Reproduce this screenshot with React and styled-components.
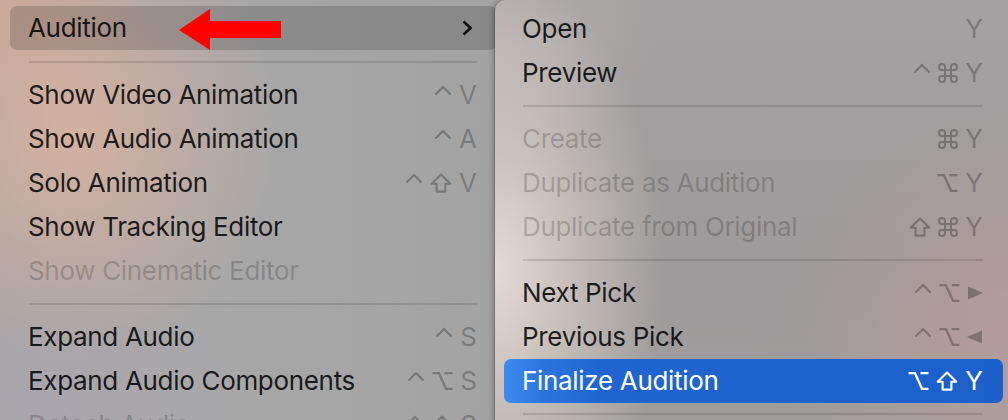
import React from "react";
import styled, { createGlobalStyle } from "styled-components";

const Global = createGlobalStyle`
  html, body { margin: 0; padding: 0; background: #a3a2a3; overflow: hidden; }
  body { font-family: Inter, "Noto Sans", "Liberation Sans", sans-serif; }
`;

const Stage = styled.div`
  position: relative;
  display: flex;
  align-items: flex-start;
  width: 1008px;
  height: 420px;
  overflow: hidden;
`;

const Panel = styled.div`
  flex: none;
  box-sizing: border-box;
  height: 440px;
  display: flex;
  flex-direction: column;
`;

const MainMenu = styled(Panel)`
  width: 507px;
  padding: 6px 10px 0 10px;
  background:
    radial-gradient(ellipse 210px 230px at 70px 130px, rgba(214, 178, 160, 0.95), rgba(214, 178, 160, 0) 100%),
    radial-gradient(ellipse 140px 120px at 0px 10px, rgba(200, 165, 152, 0.9), rgba(200, 165, 152, 0) 100%),
    radial-gradient(ellipse 200px 140px at 40px 400px, rgba(168, 166, 174, 0.9), rgba(168, 166, 174, 0) 100%),
    linear-gradient(90deg, #aaa5a4 0%, #a7a7a8 45%, #a3a3a3 100%);
`;

const SubMenu = styled(Panel)`
  position: relative;
  z-index: 1;
  width: 517px;
  margin-left: -12px;
  padding: 7px 9px 0 9px;
  border-top-left-radius: 10px;
  box-shadow: -1px 0 0 rgba(0, 0, 0, 0.18), -3px 0 5px rgba(0, 0, 0, 0.18);
  background:
    radial-gradient(ellipse 170px 300px at 0px 270px, rgba(232, 219, 213, 0.98), rgba(232, 219, 213, 0) 100%),
    radial-gradient(ellipse 230px 220px at 520px 330px, rgba(186, 156, 156, 0.85), rgba(186, 156, 156, 0) 100%),
    radial-gradient(ellipse 160px 120px at 0px 40px, rgba(190, 182, 180, 0.6), rgba(190, 182, 180, 0) 100%),
    linear-gradient(180deg, #a4a2a2 0%, #9c9a9a 60%, #a09d9d 100%);
`;

const Row = styled.div`
  flex: none;
  height: 44px;
  display: flex;
  align-items: center;
  padding: 0 20px 0 18px;
  border-radius: 7px;
  font-size: 26px;
  line-height: 44px;
  letter-spacing: -0.32px;
  white-space: nowrap;
  color: ${(p) =>
    p.$selected ? "#ffffff" : p.$disabled ? "rgba(0,0,0,0.2)" : "rgba(0,0,0,0.86)"};
  background: ${(p) =>
    p.$selected
      ? "linear-gradient(90deg, #3d8bf1 0%, #2b74de 8%, #1f64cf 20%, #1c61cb 100%)"
      : p.$open
      ? "rgba(0,0,0,0.16)"
      : "transparent"};
`;

const Label = styled.span`
  flex: 1;
`;

const Shortcut = styled.span`
  display: flex;
  align-items: center;
  gap: 7px;
  letter-spacing: 0;
  color: ${(p) => (p.$selected ? "#ffffff" : "rgba(0,0,0,0.27)")};
  svg {
    display: block;
    flex: none;
  }
`;

const Key = styled.span`
  display: block;
`;

const Separator = styled.div`
  flex: none;
  height: ${(p) => p.$h || 22}px;
  display: flex;
  align-items: center;
  padding: 0 20px 0 19px;
  &::before {
    content: "";
    flex: 1;
    height: 2px;
    background: rgba(0, 0, 0, 0.12);
  }
`;

const Chevron = styled.svg`
  margin-right: 5px;
  color: rgba(0, 0, 0, 0.85);
`;

const Arrow = styled.svg`
  position: absolute;
  left: 179px;
  top: 9px;
  z-index: 2;
`;

const Ctrl = () => (
  <svg width="18" height="20" viewBox="0 0 18 20">
    <polyline points="1.5,9.5 9,2 16.5,9.5" fill="none" stroke="currentColor" strokeWidth="2.2" />
  </svg>
);
const Shift = () => (
  <svg width="22" height="20" viewBox="0 0 22 20">
    <path d="M11 1.6 L20.3 10.8 H15.4 V18.6 H6.6 V10.8 H1.7 Z" fill="none" stroke="currentColor" strokeWidth="2.1" strokeLinejoin="round" />
  </svg>
);
const Opt = () => (
  <svg width="21" height="20" viewBox="0 0 21 20">
    <path d="M0.5 2.2 H7 L14 17.8 H20.5 M12.5 2.2 H20.5" fill="none" stroke="currentColor" strokeWidth="2.3" />
  </svg>
);
const Cmd = () => (
  <svg width="20" height="20" viewBox="2 2 20 20">
    <path
      d="M15 6v12a3 3 0 1 0 3-3H6a3 3 0 1 0 3 3V6a3 3 0 1 0-3 3h12a3 3 0 1 0-3-3"
      fill="none"
      stroke="currentColor"
      strokeWidth="2"
    />
  </svg>
);
const Right = () => (
  <svg width="16" height="20" viewBox="0 0 16 20">
    <polygon points="1,3.5 16,10 1,16.5" fill="currentColor" />
  </svg>
);
const Left = () => (
  <svg width="16" height="20" viewBox="0 0 16 20">
    <polygon points="15,3.5 0,10 15,16.5" fill="currentColor" />
  </svg>
);

const ICONS = { ctrl: Ctrl, shift: Shift, opt: Opt, cmd: Cmd, right: Right, left: Left };

const Keys = ({ keys, selected }) => (
  <Shortcut $selected={selected}>
    {keys.map((k, i) => {
      const Icon = ICONS[k];
      return Icon ? <Icon key={i} /> : <Key key={i}>{k}</Key>;
    })}
  </Shortcut>
);

const mainItems = [
  { label: "Audition", open: true, submenu: true },
  { sep: true, h: 23 },
  { label: "Show Video Animation", keys: ["ctrl", "V"] },
  { label: "Show Audio Animation", keys: ["ctrl", "A"] },
  { label: "Solo Animation", keys: ["ctrl", "shift", "V"] },
  { label: "Show Tracking Editor" },
  { label: "Show Cinematic Editor", disabled: true },
  { sep: true },
  { label: "Expand Audio", keys: ["ctrl", "S"] },
  { label: "Expand Audio Components", keys: ["ctrl", "opt", "S"] },
  { label: "Detach Audio", keys: ["ctrl", "shift", "S"], disabled: true },
];

const subItems = [
  { label: "Open", keys: ["Y"] },
  { label: "Preview", keys: ["ctrl", "cmd", "Y"] },
  { sep: true },
  { label: "Create", keys: ["cmd", "Y"], disabled: true },
  { label: "Duplicate as Audition", keys: ["opt", "Y"], disabled: true },
  { label: "Duplicate from Original", keys: ["shift", "cmd", "Y"], disabled: true },
  { sep: true },
  { label: "Next Pick", keys: ["ctrl", "opt", "right"] },
  { label: "Previous Pick", keys: ["ctrl", "opt", "left"] },
  { label: "Finalize Audition", keys: ["opt", "shift", "Y"], selected: true },
  { sep: true },
];

const renderItems = (items) =>
  items.map((it, i) =>
    it.sep ? (
      <Separator key={i} $h={it.h} />
    ) : (
      <Row key={i} $open={it.open} $selected={it.selected} $disabled={it.disabled}>
        <Label>{it.label}</Label>
        {it.submenu && (
          <Chevron width="10" height="16" viewBox="0 0 10 16">
            <polyline points="1.5,1.5 8.5,8 1.5,14.5" fill="none" stroke="currentColor" strokeWidth="2.6" />
          </Chevron>
        )}
        {it.keys && <Keys keys={it.keys} selected={it.selected} />}
      </Row>
    )
  );

export default function App() {
  return (
    <>
      <Global />
      <Stage>
        <MainMenu>{renderItems(mainItems)}</MainMenu>
        <SubMenu>{renderItems(subItems)}</SubMenu>
        <Arrow width="102" height="41" viewBox="0 0 102 41">
          <polygon points="0,21 31,0 31,12 102,12 102,29 31,29 31,41" fill="#ff0000" />
        </Arrow>
      </Stage>
    </>
  );
}
